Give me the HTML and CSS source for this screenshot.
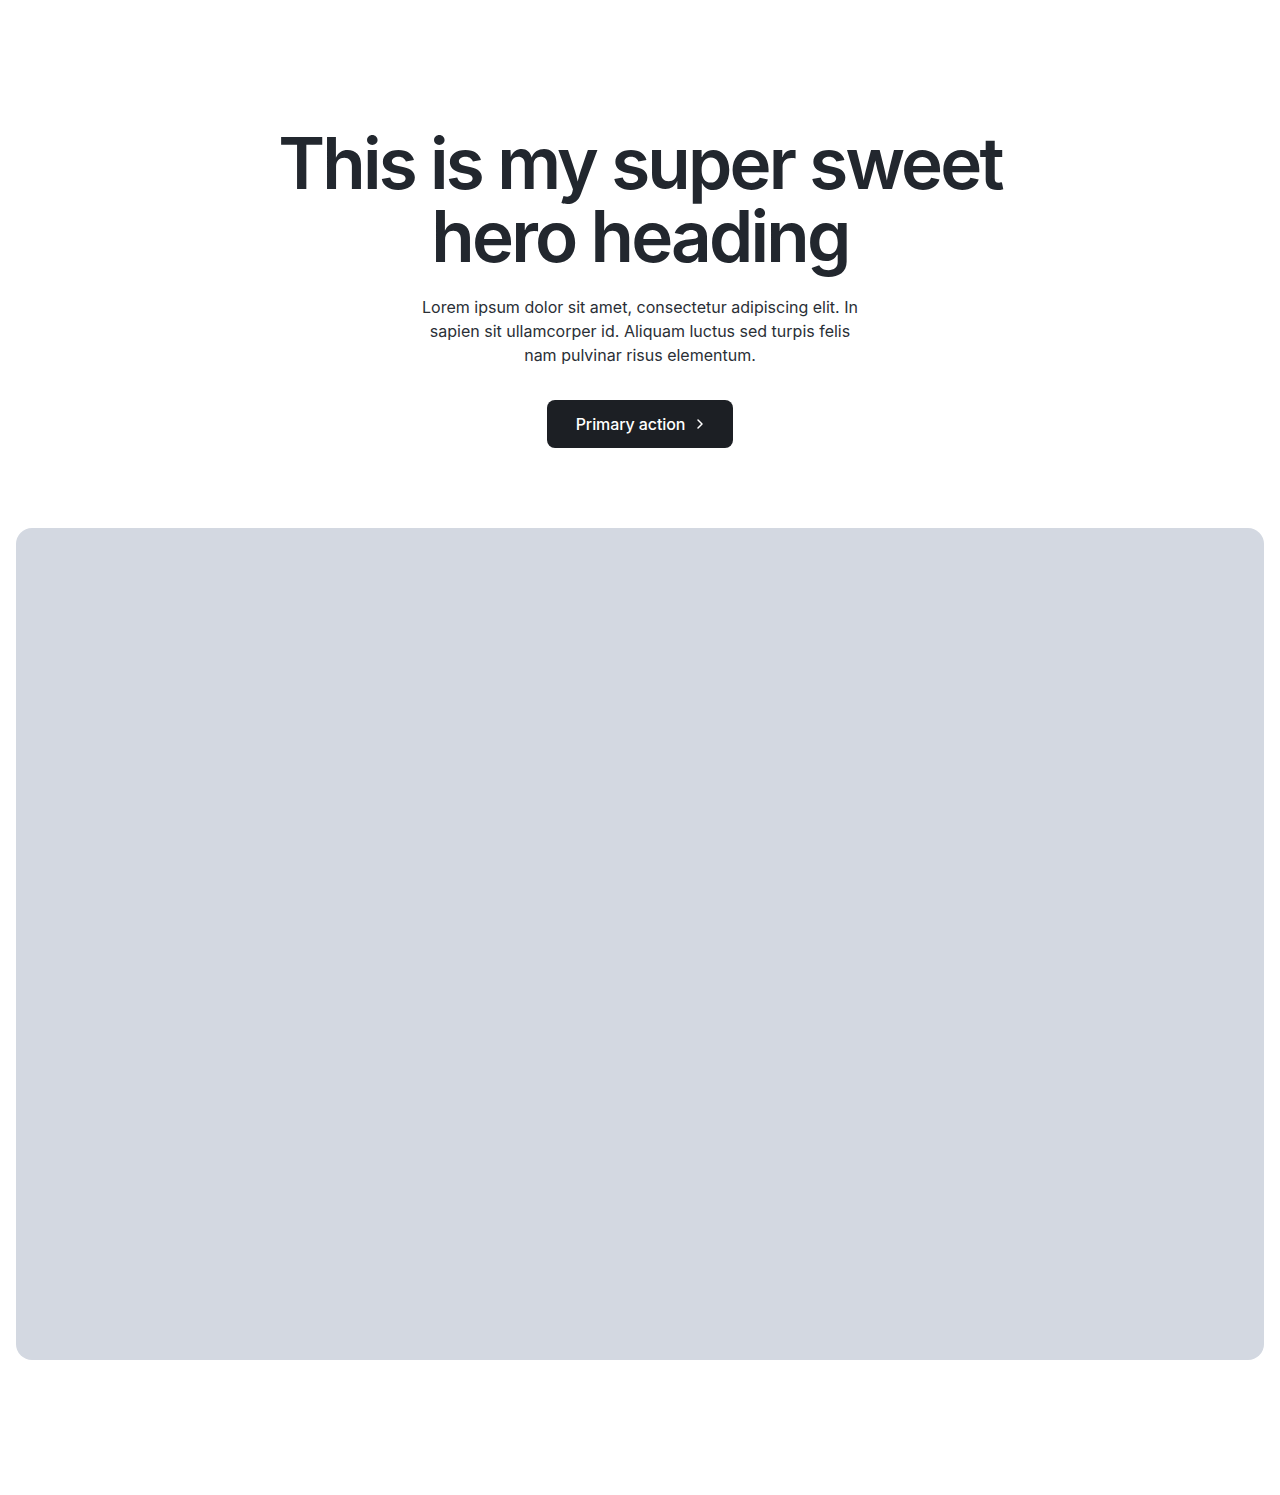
FILE: index.html
```html
<!DOCTYPE html>
<html lang="en">
<head>
<meta charset="utf-8">
<title>Hero</title>
<link rel="stylesheet" href="styles.css">
</head>
<body>
<main class="page">
  <section class="hero">
    <h1 class="hero-title">This is my super sweet<br>hero heading</h1>
    <p class="hero-text">Lorem ipsum dolor sit amet, consectetur adipiscing elit. In sapien sit ullamcorper id. Aliquam luctus sed turpis felis nam pulvinar risus elementum.</p>
    <a class="btn-primary" href="#">Primary action
      <svg class="btn-icon" width="16" height="16" viewBox="0 0 16 16" fill="none" aria-hidden="true"><path d="M6 4l4 4-4 4" stroke="currentColor" stroke-width="1.5" stroke-linecap="round" stroke-linejoin="round"/></svg>
    </a>
  </section>
  <div class="media"></div>
</main>
</body>
</html>
```
FILE: styles.css
```css
* { box-sizing: border-box; }
html, body { margin: 0; padding: 0; background: #ffffff; }
body { font-family: Inter, "Noto Sans", sans-serif; color: #22272e; }
.page { padding: 0 16px 135px; }
.hero {
  display: flex;
  flex-direction: column;
  align-items: center;
  text-align: center;
  padding-top: 127px;
}
.hero-title {
  margin: 0;
  font-size: 71px;
  line-height: 73px;
  font-weight: 600;
  letter-spacing: -2.8px;
  color: #22272e;
}
.hero-text {
  margin: 22px 0 0;
  width: 450px;
  font-size: 16px;
  line-height: 24px;
  color: #2a2f36;
}
.btn-primary {
  margin-top: 33px;
  display: inline-flex;
  align-items: center;
  gap: 7px;
  height: 48px;
  padding: 0 25px 0 29px;
  background: #1c1f24;
  color: #ffffff;
  border-radius: 8px;
  font-size: 16px;
  font-weight: 500;
  letter-spacing: -0.1px;
  text-decoration: none;
}
.btn-icon { display: block; }
.media {
  margin-top: 80px;
  height: 832px;
  background: #d3d8e1;
  border-radius: 16px;
}
```
